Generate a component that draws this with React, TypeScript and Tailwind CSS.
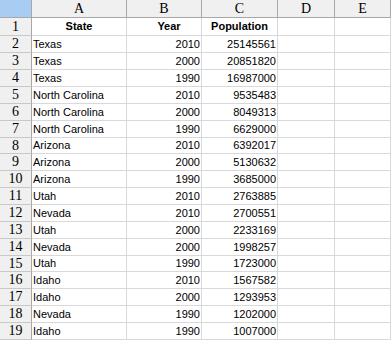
const cols = [
  { key: "A", w: "w-[95px]" },
  { key: "B", w: "w-[75px]" },
  { key: "C", w: "w-[76px]" },
  { key: "D", w: "w-[57px]" },
  { key: "E", w: "w-[56px]" },
];

const rows: [string, string, string][] = [
  ["Texas", "2010", "25145561"],
  ["Texas", "2000", "20851820"],
  ["Texas", "1990", "16987000"],
  ["North Carolina", "2010", "9535483"],
  ["North Carolina", "2000", "8049313"],
  ["North Carolina", "1990", "6629000"],
  ["Arizona", "2010", "6392017"],
  ["Arizona", "2000", "5130632"],
  ["Arizona", "1990", "3685000"],
  ["Utah", "2010", "2763885"],
  ["Nevada", "2010", "2700551"],
  ["Utah", "2000", "2233169"],
  ["Nevada", "2000", "1998257"],
  ["Utah", "1990", "1723000"],
  ["Idaho", "2010", "1567582"],
  ["Idaho", "2000", "1293953"],
  ["Nevada", "1990", "1202000"],
  ["Idaho", "1990", "1007000"],
];

// rows 2..19, a couple a pixel shorter so the bottom lands where the reference does
const shortRows = new Set([6, 13]);

const serif = "font-['Liberation_Serif',serif]";
const cellCls = "border-r border-b border-[#d9d9d9] overflow-hidden whitespace-nowrap";

function RowHeader({ n }: { n: number }) {
  return (
    <div className={`w-[32px] shrink-0 border-r border-b border-r-[#a8a8a8] border-b-[#c8c8c8] bg-[#f0f0f0] flex items-center justify-center text-[14px] ${serif}`}>
      {n}
    </div>
  );
}

export default function App() {
  return (
    <div className="w-[391px] h-[342px] bg-white text-black font-['Liberation_Sans',Arial,sans-serif] text-[11px] leading-none overflow-hidden">
      <div className="flex h-[18px]">
        <div className="w-[32px] shrink-0 bg-[#a9cdf2] border-r border-b border-[#a8a8a8]" />
        {cols.map((c) => (
          <div
            key={c.key}
            className={`${c.w} shrink-0 bg-[#f0f0f0] border-r border-b border-[#a8a8a8] flex items-center justify-center text-[14px] ${serif}`}
          >
            {c.key}
          </div>
        ))}
      </div>

      <div className="flex h-[18px]">
        <RowHeader n={1} />
        <div className={`${cols[0].w} ${cellCls} flex items-center justify-center font-bold`}>State</div>
        <div className={`${cols[1].w} ${cellCls} flex items-center justify-center font-bold pl-[10px]`}>Year</div>
        <div className={`${cols[2].w} ${cellCls} flex items-center justify-center font-bold`}>Population</div>
        <div className={`${cols[3].w} ${cellCls}`} />
        <div className={`${cols[4].w} ${cellCls}`} />
      </div>

      {rows.map(([state, year, pop], i) => (
        <div key={i} className={`flex ${shortRows.has(i) ? "h-[16px]" : "h-[17px]"}`}>
          <RowHeader n={i + 2} />
          <div className={`${cols[0].w} ${cellCls} flex items-center pl-[1px]`}>{state}</div>
          <div className={`${cols[1].w} ${cellCls} flex items-center justify-end pr-[1px]`}>{year}</div>
          <div className={`${cols[2].w} ${cellCls} flex items-center justify-end pr-[1px]`}>{pop}</div>
          <div className={`${cols[3].w} ${cellCls}`} />
          <div className={`${cols[4].w} ${cellCls}`} />
        </div>
      ))}
    </div>
  );
}
